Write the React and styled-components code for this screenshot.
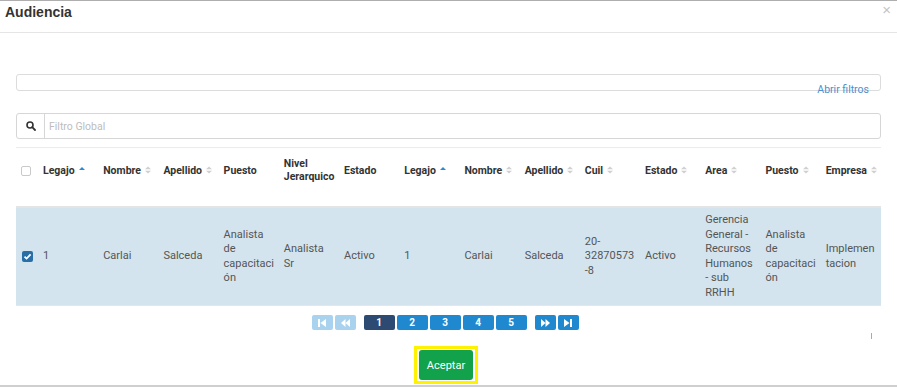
import React from 'react';
import styled, { createGlobalStyle } from 'styled-components';

const GlobalStyle = createGlobalStyle`
  html, body { margin: 0; padding: 0; background: #fff; }
  body { font-family: Roboto, "Liberation Sans", sans-serif; }
`;

const columns = [
  { label: 'Legajo', sort: 'asc' },
  { label: 'Nombre', sort: 'both' },
  { label: 'Apellido', sort: 'both' },
  { label: 'Puesto' },
  { label: 'Nivel Jerarquico' },
  { label: 'Estado' },
  { label: 'Legajo', sort: 'asc' },
  { label: 'Nombre', sort: 'both' },
  { label: 'Apellido', sort: 'both' },
  { label: 'Cuil', sort: 'both' },
  { label: 'Estado', sort: 'both' },
  { label: 'Area', sort: 'both' },
  { label: 'Puesto', sort: 'both' },
  { label: 'Empresa', sort: 'both' },
];

const row = [
  '1', 'Carlai', 'Salceda', 'Analista de capacitación', 'Analista Sr', 'Activo',
  '1', 'Carlai', 'Salceda', '20-32870573-8', 'Activo',
  'Gerencia General - Recursos Humanos - sub RRHH', 'Analista de capacitación', 'Implementacion',
];

const SortIcon = ({ dir }) =>
  dir === 'asc' ? (
    <SortSvg width="6" height="8" viewBox="0 0 6 8">
      <path d="M0 4 L3 1 L6 4 Z" fill="#2a8ad2" />
    </SortSvg>
  ) : (
    <SortSvg width="6" height="8" viewBox="0 0 6 8">
      <path d="M0 3.3 L3 0.5 L6 3.3 Z M0 4.7 L3 7.5 L6 4.7 Z" fill="#d0d0d0" />
    </SortSvg>
  );

const App = () => {
  return (
    <>
      <GlobalStyle />
      <Modal>
        <Header>
          <Title>Audiencia</Title>
          <Close>×</Close>
        </Header>
        <Body>
          <FilterPanel>
            <FilterLink>Abrir filtros</FilterLink>
          </FilterPanel>
          <SearchBox>
            <SearchAddon>
              <svg width="10" height="10" viewBox="0 0 10 10">
                <circle cx="4" cy="4" r="3" fill="none" stroke="#333" strokeWidth="1.6" />
                <path d="M6.2 6.2 L9 9" stroke="#333" strokeWidth="1.8" strokeLinecap="round" />
              </svg>
            </SearchAddon>
            <SearchInput placeholder="Filtro Global" />
          </SearchBox>
          <Table>
            <colgroup>
              <col style={{ width: 22 }} />
              {columns.map((c, i) => <col key={i} />)}
            </colgroup>
            <thead>
              <tr>
                <Th $check>
                  <Check />
                </Th>
                {columns.map((c, i) => (
                  <Th key={i}>
                    {c.label}
                    {c.sort && <SortIcon dir={c.sort} />}
                  </Th>
                ))}
              </tr>
            </thead>
            <tbody>
              <SelectedRow>
                <Td $check>
                  <Check $checked>
                    <svg width="9" height="9" viewBox="0 0 9 9">
                      <path d="M1.5 4.6 L3.6 6.6 L7.6 2.4" fill="none" stroke="#fff" strokeWidth="1.8" />
                    </svg>
                  </Check>
                </Td>
                {row.map((v, i) => <Td key={i}>{v}</Td>)}
              </SelectedRow>
            </tbody>
          </Table>
          <Footer>
            <Pager>
              <NavGroup>
                <PageButton $nav $disabled>
                  <svg width="8" height="8" viewBox="0 0 8 8"><path d="M0 0H2V8H0Z M8 0V8L2.5 4Z" fill="#fff" /></svg>
                </PageButton>
                <PageButton $nav $disabled>
                  <svg width="9" height="8" viewBox="0 0 9 8"><path d="M4.5 0V8L0 4Z M9 0V8L4.5 4Z" fill="#fff" /></svg>
                </PageButton>
              </NavGroup>
              <NavGroup>
                {[1, 2, 3, 4, 5].map((n) => (
                  <PageButton key={n} $active={n === 1}>{n}</PageButton>
                ))}
              </NavGroup>
              <NavGroup>
                <PageButton $nav>
                  <svg width="9" height="8" viewBox="0 0 9 8"><path d="M0 0V8L4.5 4Z M4.5 0V8L9 4Z" fill="#fff" /></svg>
                </PageButton>
                <PageButton $nav>
                  <svg width="8" height="8" viewBox="0 0 8 8"><path d="M0 0V8L5.5 4Z M6 0H8V8H6Z" fill="#fff" /></svg>
                </PageButton>
              </NavGroup>
            </Pager>
            <ScrollMark />
            <Highlight>
              <AcceptButton>Aceptar</AcceptButton>
            </Highlight>
          </Footer>
        </Body>
      </Modal>
    </>
  );
};

const Modal = styled.div`
  height: 387px;
  box-sizing: border-box;
  border-top: 1px solid #aeaeae;
  border-bottom: 2px solid #cfcfcf;
  background: #fff;
  display: flex;
  flex-direction: column;
`;

const Header = styled.div`
  height: 31px;
  border-bottom: 1px solid #e5e5e5;
  display: flex;
  align-items: flex-start;
  justify-content: space-between;
  padding: 0 6px 0 5px;
`;

const Title = styled.h4`
  margin: 2px 0 0;
  font-family: "Liberation Sans", Arial, sans-serif;
  font-size: 14px;
  font-weight: bold;
  color: #333;
  line-height: 18px;
`;

const Close = styled.span`
  font-family: "Liberation Sans", Arial, sans-serif;
  font-size: 15px;
  line-height: 15px;
  margin-top: 1px;
  color: #c4c4c4;
`;

const Body = styled.div`
  padding: 41px 16px 0;
  display: flex;
  flex-direction: column;
`;

const FilterPanel = styled.div`
  height: 15px;
  border: 1px solid #dcdcdc;
  border-radius: 3px;
  display: flex;
  justify-content: flex-end;
  align-items: flex-start;
`;

const FilterLink = styled.a`
  margin: 8px 11px 0 0;
  font-size: 10.5px;
  line-height: 13px;
  color: #4a8fd0;
  cursor: pointer;
`;

const SearchBox = styled.div`
  margin-top: 22px;
  height: 24px;
  border: 1px solid #d6d6d6;
  border-radius: 3px;
  display: flex;
`;

const SearchAddon = styled.div`
  width: 27px;
  border-right: 1px solid #d6d6d6;
  display: flex;
  align-items: center;
  justify-content: center;
`;

const SearchInput = styled.input`
  flex: 1;
  border: none;
  outline: none;
  padding: 0 4px;
  font-family: Roboto, sans-serif;
  font-size: 10.5px;
  color: #555;
  background: transparent;
  &::placeholder { color: #bdbdbd; }
`;

const Table = styled.table`
  margin-top: 8px;
  width: 100%;
  table-layout: fixed;
  border-collapse: collapse;
  border-top: 1px solid #ececec;
`;

const Th = styled.th`
  text-align: left;
  vertical-align: middle;
  padding: ${(p) => (p.$check ? '9px 0 23px 5px' : '9px 3px 23px 5px')};
  font-size: 10.5px;
  font-weight: bold;
  color: #333;
  line-height: 13px;
  border-bottom: 2px solid #e4e4e4;
  height: 26px;
`;

const SortSvg = styled.svg`
  margin-left: 4px;
  vertical-align: 0px;
`;

const SelectedRow = styled.tr`
  background: #d3e4ee;
  border-bottom: 1px solid #e6e6e6;
`;

const Td = styled.td`
  padding: ${(p) => (p.$check ? '5px 0 5px 6px' : '5px 3px 5px 5px')};
  font-size: 11px;
  line-height: 14.5px;
  color: #555;
  vertical-align: middle;
  overflow-wrap: anywhere;
`;

const Check = styled.span`
  display: inline-flex;
  align-items: center;
  justify-content: center;
  width: ${(p) => (p.$checked ? '11px' : '10px')};
  height: ${(p) => (p.$checked ? '11px' : '10px')};
  box-sizing: border-box;
  border-radius: 2px;
  border: ${(p) => (p.$checked ? 'none' : '1px solid #c9c9c9')};
  background: ${(p) => (p.$checked ? '#2a6ea6' : '#fff')};
  vertical-align: middle;
`;

const Footer = styled.div`
  position: relative;
  display: flex;
  flex-direction: column;
  align-items: center;
  padding: 9px 7px 0 0;
`;

const Pager = styled.div`
  display: flex;
  gap: 8px;
`;

const NavGroup = styled.div`
  display: flex;
  gap: 2px;
`;

const PageButton = styled.button`
  width: ${(p) => (p.$nav ? '21px' : '31px')};
  height: 15px;
  padding: 0;
  border: none;
  border-radius: 2px;
  display: flex;
  align-items: center;
  justify-content: center;
  font-family: Roboto, sans-serif;
  font-size: 10px;
  font-weight: bold;
  color: #fff;
  background: ${(p) => (p.$active ? '#2d4a73' : p.$disabled ? '#a9d2ef' : '#1f88cf')};
`;

const ScrollMark = styled.span`
  position: absolute;
  right: 9px;
  top: 27px;
  width: 1px;
  height: 6px;
  background: #aaa;
`;

const Highlight = styled.div`
  margin: 16px -2px 0 0;
  padding: 1px 2px;
  border: 3px solid #fff200;
`;

const AcceptButton = styled.button`
  display: block;
  width: 54px;
  height: 30px;
  border: none;
  border-radius: 3px;
  background: #11a24b;
  color: #fff;
  font-family: Roboto, sans-serif;
  font-size: 11px;
`;

export default App;
